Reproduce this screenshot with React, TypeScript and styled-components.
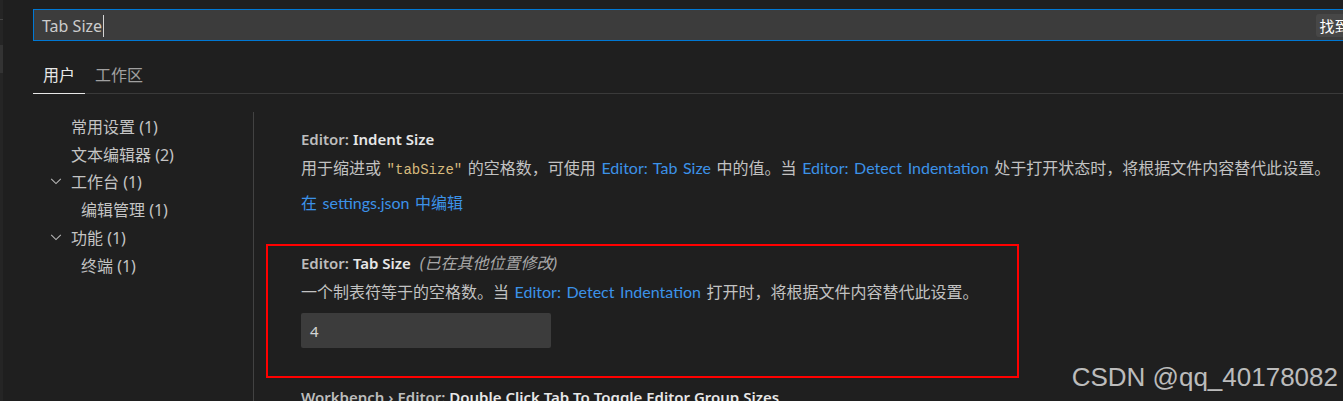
import * as React from 'react';
import styled, { createGlobalStyle } from 'styled-components';

const GlobalStyle = createGlobalStyle`
  html, body {
    margin: 0;
    padding: 0;
    background: #1f1f1f;
    overflow: hidden;
  }

  body {
    font-family: "Noto Sans", "Noto Sans CJK SC", sans-serif;
  }
`;

const Window = styled.div`
  position: relative;
  display: flex;
  width: 1343px;
  height: 401px;
  overflow: hidden;
  background: #1f1f1f;
`;

const EdgeStrip = styled.div`
  flex: 0 0 3px;
  display: flex;
  flex-direction: column;
  background: #252525;
`;

const EdgeMark = styled.div<{ $top: number; $height: number; $color: string }>`
  margin-top: ${(p) => p.$top}px;
  height: ${(p) => p.$height}px;
  background: ${(p) => p.$color};
`;

const Editor = styled.div`
  flex: 1;
  min-width: 0;
  padding-left: 30px;
  display: flex;
  flex-direction: column;
`;

const SearchBar = styled.div`
  flex-shrink: 0;
  display: flex;
  align-items: center;
  box-sizing: border-box;
  width: 1389px;
  height: 32px;
  margin-top: 9px;
  padding: 1px 4px 0 8px;
  border: 1px solid #0078d4;
  background: #3c3c3c;
  color: #cccccc;
  font-size: 16px;
`;

const Caret = styled.span`
  width: 1px;
  height: 22px;
  margin-left: 1px;
  background: #d4d4d4;
`;

const CountBadge = styled.span`
  margin-left: auto;
  display: flex;
  align-items: center;
  height: 23px;
  padding: 0 6px 0 4px;
  border-radius: 3px;
  background: #474747;
  color: #ffffff;
  font-size: 15px;
  white-space: nowrap;
`;

const TabBar = styled.div`
  display: flex;
  margin-top: 16px;
  border-bottom: 1px solid #3a3a3a;
  width: 1400px;
`;

const Tab = styled.div<{ $active?: boolean }>`
  display: flex;
  align-items: center;
  box-sizing: border-box;
  height: 37px;
  padding: 0 10px 3px;
  margin-bottom: -1px;
  border-bottom: 1px solid ${(p) => (p.$active ? '#e7e7e7' : 'transparent')};
  color: ${(p) => (p.$active ? '#e7e7e7' : '#a0a0a0')};
  font-size: 16px;
`;

const Body = styled.div`
  flex: 1;
  display: flex;
  margin-top: 18px;
  min-height: 0;
`;

const Toc = styled.div`
  flex: 0 0 220px;
  display: flex;
  flex-direction: column;
`;

const TocRow = styled.div<{ $depth: number }>`
  display: flex;
  align-items: center;
  height: 27.75px;
  padding-left: ${(p) => 15 + p.$depth * 10}px;
  color: #c4c4c4;
  font-size: 16px;
  white-space: nowrap;
`;

const ChevronSlot = styled.span`
  display: flex;
  align-items: center;
  justify-content: center;
  width: 16px;
  height: 16px;
  margin-right: 7px;
  color: #b8b8b8;
`;

const Separator = styled.div`
  flex: 0 0 1px;
  background: #424242;
`;

const SettingsList = styled.div`
  flex: 1;
  min-width: 0;
  padding: 8px 0 0 12px;
  display: flex;
  flex-direction: column;
`;

const SettingItem = styled.div<{ $highlighted?: boolean }>`
  flex-shrink: 0;
  box-sizing: border-box;
  width: ${(p) => (p.$highlighted ? '753px' : 'auto')};
  padding: 6px 33px 28px;
  border: 2px solid ${(p) => (p.$highlighted ? '#ff0000' : 'transparent')};
  white-space: nowrap;
`;

const Title = styled.div`
  line-height: 22px;
  font-size: 15px;
  font-weight: 600;
  color: #e7e7e7;
`;

const Category = styled.span`
  color: #bdbdbd;
`;

const Modified = styled.span`
  margin-left: 9px;
  font-size: 16px;
  font-style: italic;
  font-weight: 400;
  color: #a8a8a8;
`;

const Description = styled.div`
  margin-top: 7px;
  line-height: 22px;
  font-family: "Lato", "Noto Sans CJK SC", sans-serif;
  font-size: 16px;
  word-spacing: 1.5px;
  color: #c2c2c2;
`;

const Link = styled.span`
  color: #3c92e8;
`;

const Code = styled.span`
  font-family: "Liberation Mono", monospace;
  font-size: 14px;
  color: #d7ba7d;
`;

const EditLink = styled.div`
  margin-top: 11px;
  line-height: 22px;
  font-family: "Lato", "Noto Sans CJK SC", sans-serif;
  font-size: 16px;
  word-spacing: 1.5px;
  color: #3c92e8;
`;

const NumberInput = styled.div`
  display: flex;
  align-items: center;
  box-sizing: border-box;
  width: 250px;
  height: 35px;
  margin-top: 10px;
  padding-left: 9px;
  border-radius: 2px;
  background: #3c3c3c;
  color: #d4d4d4;
  font-size: 15px;
`;

const Watermark = styled.div`
  position: absolute;
  right: 5px;
  top: 361px;
  font-family: "Liberation Sans", sans-serif;
  font-size: 26px;
  line-height: 32px;
  color: rgba(225, 225, 225, 0.82);
  white-space: nowrap;
`;

const Chevron = () => (
  <svg width="14" height="14" viewBox="0 0 16 16" fill="none">
    <path d="M2.5 5.5 8 11l5.5-5.5" stroke="currentColor" strokeWidth="1.2" />
  </svg>
);

const tocItems = [
  { label: '常用设置 (1)', depth: 0, open: false },
  { label: '文本编辑器 (2)', depth: 0, open: false },
  { label: '工作台 (1)', depth: 0, open: true },
  { label: '编辑管理 (1)', depth: 1, open: false },
  { label: '功能 (1)', depth: 0, open: true },
  { label: '终端 (1)', depth: 1, open: false },
];

export default function App() {
  return (
    <Window>
      <GlobalStyle />
      <EdgeStrip>
        <EdgeMark $top={19} $height={1} $color="#444444" />
        <EdgeMark $top={25} $height={28} $color="#333333" />
      </EdgeStrip>

      <Editor>
        <SearchBar>
          <span>Tab Size</span>
          <Caret />
          <CountBadge>找到 2 个设置</CountBadge>
        </SearchBar>

        <TabBar>
          <Tab $active>用户</Tab>
          <Tab>工作区</Tab>
        </TabBar>

        <Body>
          <Toc>
            {tocItems.map((item) => (
              <TocRow key={item.label} $depth={item.depth}>
                <ChevronSlot>{item.open && <Chevron />}</ChevronSlot>
                {item.label}
              </TocRow>
            ))}
          </Toc>

          <Separator />

          <SettingsList>
            <SettingItem>
              <Title>
                <Category>Editor: </Category>Indent Size
              </Title>
              <Description>
                用于缩进或 <Code>"tabSize"</Code> 的空格数，可使用 <Link>Editor: Tab Size</Link> 中的值。当{' '}
                <Link>Editor: Detect Indentation</Link> 处于打开状态时，将根据文件内容替代此设置。
              </Description>
              <EditLink>在 settings.json 中编辑</EditLink>
            </SettingItem>

            <SettingItem $highlighted>
              <Title>
                <Category>Editor: </Category>Tab Size
                <Modified>(已在其他位置修改)</Modified>
              </Title>
              <Description>
                一个制表符等于的空格数。当 <Link>Editor: Detect Indentation</Link> 打开时，将根据文件内容替代此设置。
              </Description>
              <NumberInput>4</NumberInput>
            </SettingItem>

            <SettingItem>
              <Title>
                <Category>Workbench › Editor: </Category>Double Click Tab To Toggle Editor Group Sizes
              </Title>
            </SettingItem>
          </SettingsList>
        </Body>
      </Editor>

      <Watermark>CSDN @qq_40178082</Watermark>
    </Window>
  );
}
